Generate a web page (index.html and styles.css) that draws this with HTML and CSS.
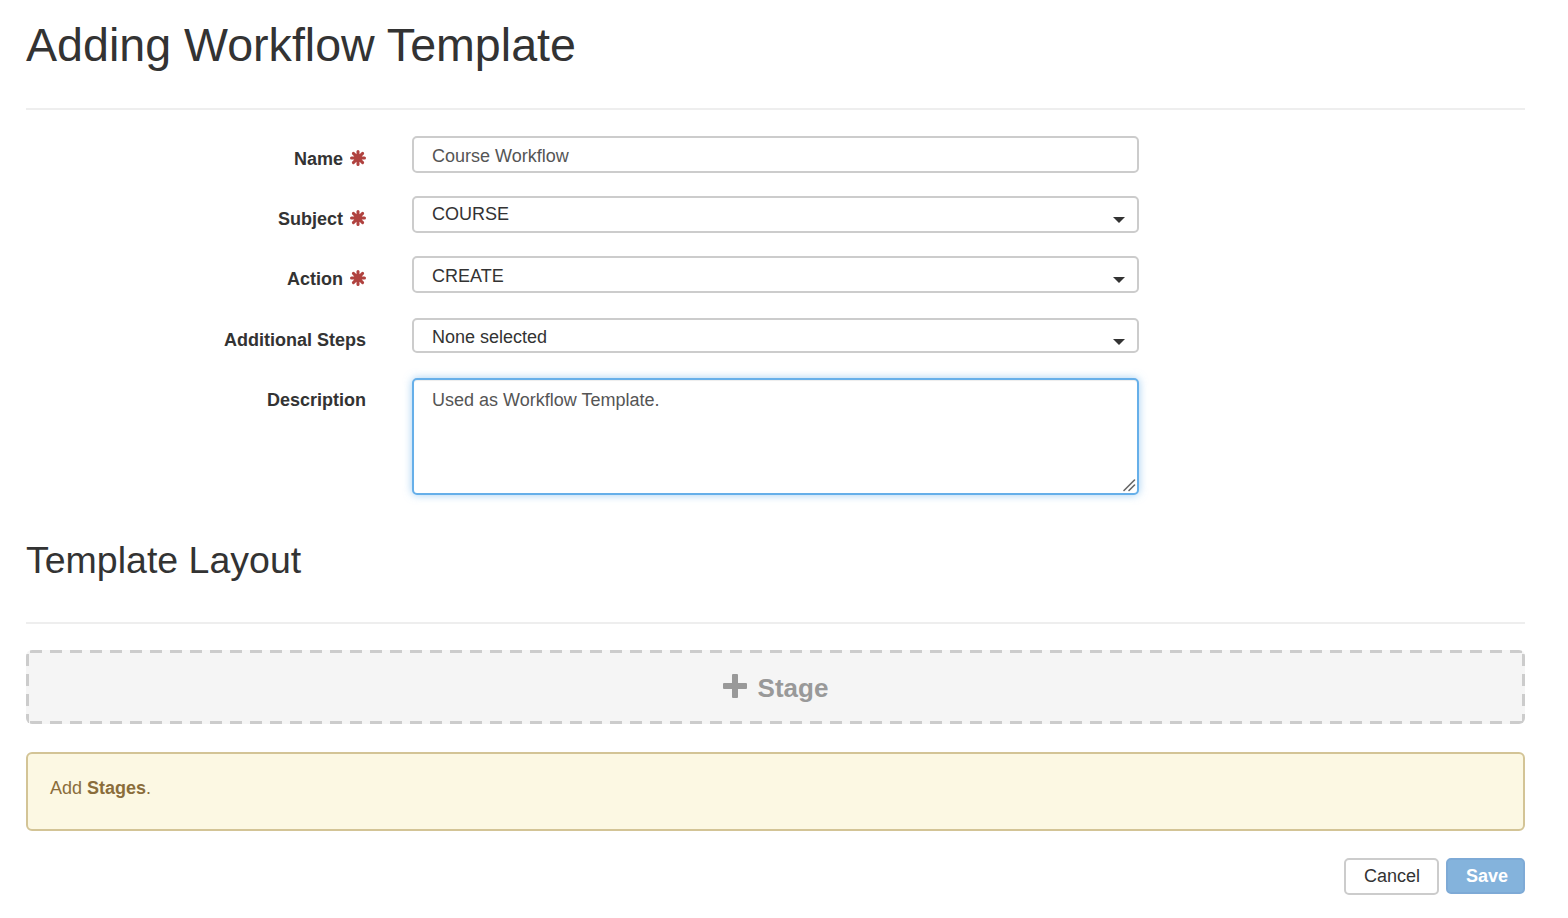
FILE: index.html
```html
<!DOCTYPE html>
<html lang="en">
<head>
<meta charset="utf-8">
<title>Adding Workflow Template</title>
<link rel="stylesheet" href="styles.css">
</head>
<body>
<div class="page">
  <h1 class="title">Adding Workflow Template</h1>
  <hr class="rule">

  <form class="form">
    <div class="row">
      <label class="label">Name <svg class="req" viewBox="0 0 16 16"><g stroke="currentColor" stroke-width="3" stroke-linecap="round"><line x1="8" y1="1.5" x2="8" y2="14.5"/><line x1="1.5" y1="8" x2="14.5" y2="8"/><line x1="3.4" y1="3.4" x2="12.6" y2="12.6"/><line x1="12.6" y1="3.4" x2="3.4" y2="12.6"/></g><circle cx="8" cy="8" r="4" fill="currentColor"/></svg></label>
      <input class="control control-text" type="text" value="Course Workflow">
    </div>
    <div class="row">
      <label class="label">Subject <svg class="req" viewBox="0 0 16 16"><g stroke="currentColor" stroke-width="3" stroke-linecap="round"><line x1="8" y1="1.5" x2="8" y2="14.5"/><line x1="1.5" y1="8" x2="14.5" y2="8"/><line x1="3.4" y1="3.4" x2="12.6" y2="12.6"/><line x1="12.6" y1="3.4" x2="3.4" y2="12.6"/></g><circle cx="8" cy="8" r="4" fill="currentColor"/></svg></label>
      <div class="control select"><span class="select-text">COURSE</span><span class="caret"></span></div>
    </div>
    <div class="row row-action">
      <label class="label">Action <svg class="req" viewBox="0 0 16 16"><g stroke="currentColor" stroke-width="3" stroke-linecap="round"><line x1="8" y1="1.5" x2="8" y2="14.5"/><line x1="1.5" y1="8" x2="14.5" y2="8"/><line x1="3.4" y1="3.4" x2="12.6" y2="12.6"/><line x1="12.6" y1="3.4" x2="3.4" y2="12.6"/></g><circle cx="8" cy="8" r="4" fill="currentColor"/></svg></label>
      <div class="control select select-action"><span class="select-text">CREATE</span><span class="caret"></span></div>
    </div>
    <div class="row row-steps">
      <label class="label label-steps">Additional Steps</label>
      <div class="control select select-steps"><span class="select-text">None selected</span><span class="caret"></span></div>
    </div>
    <div class="row row-desc">
      <label class="label label-desc">Description</label>
      <div class="textarea-wrap">
        <textarea class="control textarea" readonly>Used as Workflow Template.</textarea>
        <svg class="grip" viewBox="0 0 14 14"><g stroke="#666" stroke-width="1.6" stroke-linecap="round"><line x1="2" y1="12.5" x2="12.5" y2="2"/><line x1="7" y1="12.5" x2="12.5" y2="7"/></g></svg>
      </div>
    </div>
  </form>

  <h2 class="subtitle">Template Layout</h2>
  <hr class="rule rule-sub">

  <div class="stage-drop">
    <svg class="plus" viewBox="0 0 24 24"><rect x="9" y="0" width="6" height="24" rx="1" fill="currentColor"/><rect x="0" y="9" width="24" height="6" rx="1" fill="currentColor"/></svg>
    <span class="stage-text">Stage</span>
  </div>

  <div class="alert">Add <strong>Stages</strong>.</div>

  <div class="actions">
    <button type="button" class="btn btn-default">Cancel</button>
    <button type="button" class="btn btn-primary">Save</button>
  </div>
</div>
</body>
</html>
```

FILE: styles.css
```css
* { box-sizing: border-box; }

html, body {
  margin: 0;
  padding: 0;
  background: #fff;
}

body {
  font-family: "Liberation Sans", Arial, Helvetica, sans-serif;
  color: #333;
  font-size: 18px;
  line-height: 20px;
}

.page {
  width: 1568px;
  padding: 20px 43px 0 26px;
}

.title {
  margin: 0 0 37px 0;
  font-size: 46.6px;
  line-height: 51px;
  font-weight: normal;
  color: #333;
}

.rule {
  margin: 0;
  border: 0;
  height: 2px;
  background: #eee;
}

.form {
  margin-top: 26px;
  display: flex;
  flex-direction: column;
}

.row {
  display: flex;
  align-items: flex-start;
  margin-bottom: 23px;
}

.row-action {
  margin-bottom: 25px;
}

.row-steps {
  margin-bottom: 25px;
}

.row-desc {
  margin-bottom: 0;
}

.label {
  width: 340px;
  margin-right: 46px;
  padding-top: 13px;
  text-align: right;
  font-weight: bold;
  font-size: 18px;
  line-height: 20px;
  color: #333;
  white-space: nowrap;
}

.label-steps { padding-top: 12px; }
.label-desc { padding-top: 12px; }

.req {
  width: 16px;
  height: 16px;
  color: #b0423f;
  vertical-align: -1px;
  margin-left: 2px;
}

.control {
  display: block;
  width: 727px;
  height: 37px;
  border: 2px solid #ccc;
  border-radius: 5px;
  background: #fff;
  padding: 7px 18px 8px 18px;
  font-family: "Liberation Sans", Arial, Helvetica, sans-serif;
  font-size: 18px;
  line-height: 20px;
  color: #555;
  outline: none;
  margin: 0;
}

.control-text {
  padding-top: 9px;
  padding-bottom: 6px;
}

.select {
  display: flex;
  align-items: flex-start;
  justify-content: space-between;
  padding-top: 5px;
  padding-right: 12px;
  color: #333;
}

.select-action {
  padding-top: 7px;
}

.select-action .caret {
  margin-top: 12px;
}

.select-steps {
  height: 35px;
  padding-top: 6px;
}

.select-steps .caret {
  margin-top: 13px;
}

.select-text {
  line-height: 22px;
}

.caret {
  width: 0;
  height: 0;
  margin-top: 14px;
  border-left: 6px solid transparent;
  border-right: 6px solid transparent;
  border-top: 6px solid #333;
}

.textarea-wrap {
  position: relative;
  width: 727px;
  height: 117px;
}

.textarea {
  height: 117px;
  padding-top: 10px;
  border-color: #66afe9;
  box-shadow: inset 0 1px 1px rgba(0,0,0,.075), 0 0 8px rgba(102,175,233,.6);
  resize: none;
  color: #555;
}

.grip {
  position: absolute;
  right: 3px;
  bottom: 3px;
  width: 14px;
  height: 14px;
}

.subtitle {
  margin: 45px 0 41px 0;
  font-size: 37.5px;
  line-height: 41px;
  font-weight: normal;
  color: #333;
}

.rule-sub {
  margin-bottom: 26px;
}

.stage-drop {
  height: 74px;
  border-radius: 6px;
  background-color: #f5f5f5;
  background-image:
    repeating-linear-gradient(to right, #ccc 0 12px, transparent 12px 20px),
    repeating-linear-gradient(to right, #ccc 0 12px, transparent 12px 20px),
    repeating-linear-gradient(to bottom, #ccc 0 12px, transparent 12px 20px),
    repeating-linear-gradient(to bottom, #ccc 0 12px, transparent 12px 20px);
  background-size: 100% 3px, 100% 3px, 3px 100%, 3px 100%;
  background-position: 4px 0, 4px 100%, 0 4px, 100% 4px;
  background-repeat: no-repeat;
  display: flex;
  align-items: center;
  justify-content: center;
  color: #999;
}

.plus {
  width: 24px;
  height: 24px;
  margin-right: 11px;
  margin-bottom: 2px;
  color: #999;
}

.stage-text {
  font-weight: bold;
  font-size: 26px;
  line-height: 30px;
  padding-top: 1px;
}

.alert {
  margin-top: 28px;
  height: 79px;
  border: 2px solid #d3c496;
  border-radius: 6px;
  background: #fcf8e3;
  color: #8a6d3b;
  padding: 24px 22px;
  font-size: 18px;
  line-height: 20px;
}

.alert strong {
  font-weight: bold;
}

.actions {
  margin-top: 27px;
  display: flex;
  justify-content: flex-end;
  gap: 7px;
}

.btn {
  height: 37px;
  border-radius: 5px;
  font-family: "Liberation Sans", Arial, Helvetica, sans-serif;
  font-size: 18px;
  line-height: 20px;
  padding: 6px 18px 8px;
  cursor: pointer;
}

.btn-default {
  width: 95px;
  background: #fff;
  border: 2px solid #ccc;
  color: #333;
}

.btn-primary {
  width: 79px;
  height: 36px;
  background: #84b3dc;
  border: 2px solid #7eaad6;
  color: #fff;
  font-weight: bold;
}
```
